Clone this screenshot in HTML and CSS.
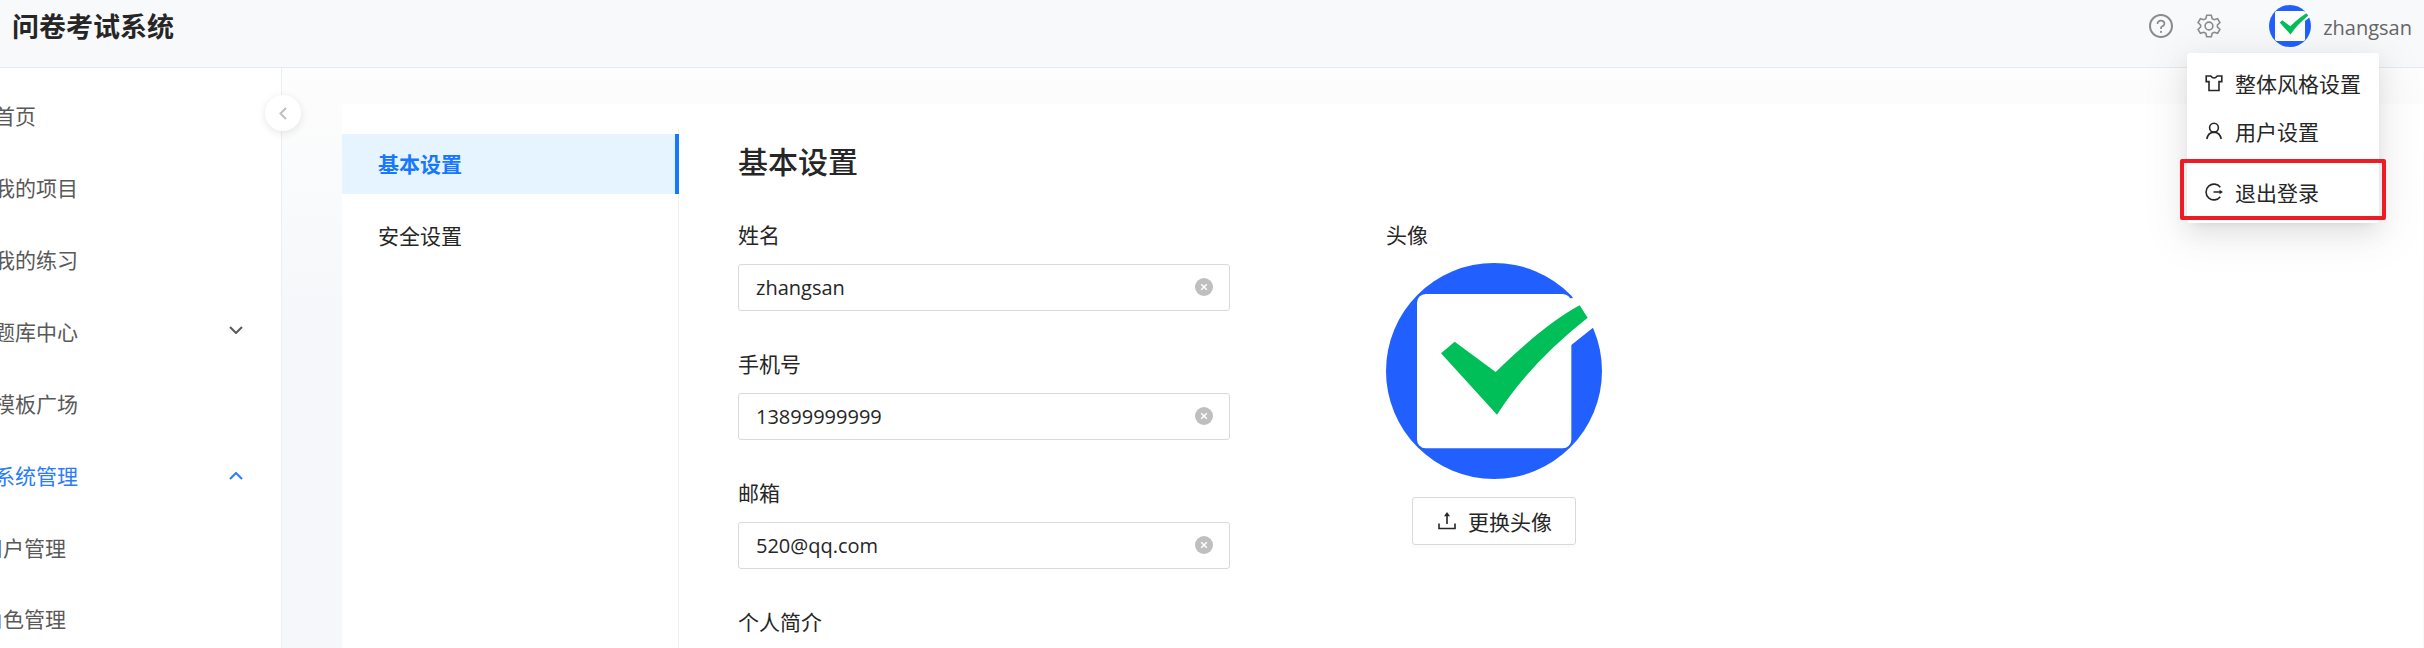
FILE: index.html
```html
<!DOCTYPE html>
<html lang="zh-CN">
<head>
    <meta charset="UTF-8">
    <title>问卷考试系统</title>
    <link rel="stylesheet" href="styles.css">
</head>
<body>
<!-- 公用图形 -->
<svg class="defs" width="0" height="0">
    <symbol id="logo" viewBox="0 0 648 648">
        <circle cx="324" cy="324" r="324" fill="#2160ff"/>
        <rect x="93" y="93" width="463" height="463" rx="26" fill="#fff"/>
        <path d="M540 106H558L575 90H660V163L621 194L555 247H540Z" fill="#fff"/>
        <path d="M165 271L206 236L329 327Q475 184 581 127L605 164Q432 300 333 455Z" fill="#00bf58"/>
    </symbol>
    <symbol id="clear" viewBox="0 0 18 18">
        <circle cx="9" cy="9" r="9" fill="#bfbfbf"/>
        <path d="M6.2 6.2L11.8 11.8M11.8 6.2L6.2 11.8" stroke="#fff" stroke-width="1.5"/>
    </symbol>
</svg>

<header class="header">
    <h1 class="title">问卷考试系统</h1>
    <div class="tools">
        <svg class="tool" viewBox="64 64 896 896"><path d="M512 64C264.600 64 64 264.600 64 512s200.600 448 448 448 448-200.600 448-448S759.400 64 512 64zm0 820c-205.400 0-372-166.600-372-372s166.600-372 372-372 372 166.600 372 372-166.600 372-372 372z"/><path d="M623.600 316.700C593.600 290.400 554 276 512 276s-81.600 14.500-111.600 40.700C369.200 344 352 380.700 352 420v7.600c0 4.400 3.600 8 8 8h48c4.400 0 8-3.600 8-8V420c0-44.100 43.100-80 96-80s96 35.900 96 80c0 31.100-22 59.600-56.100 72.700-21.200 8.100-39.200 22.300-52.100 40.900-13.100 19-19.900 41.800-19.900 64.900V620c0 4.400 3.600 8 8 8h48c4.400 0 8-3.600 8-8v-22.700a48.300 48.300 0 0130.900-44.800c59-22.700 97.100-74.700 97.100-132.500.1-39.300-17.100-76-48.300-103.300zM472 732a40 40 0 1080 0 40 40 0 10-80 0z"/></svg>
        <svg class="tool" viewBox="0 0 24 24"><path class="line" d="M9.700 1.200H14.300L15.200 4.600L17.200 5.700L20.600 4.700L22.900 8.700L20.400 11V13L22.900 15.300L20.600 19.300L17.200 18.300L15.200 19.400L14.300 22.800H9.700L8.800 19.400L6.800 18.300L3.400 19.300L1.100 15.300L3.600 13V11L1.100 8.700L3.400 4.700L6.800 5.700L8.800 4.600Z"/><circle class="line" cx="12" cy="12" r="3.900"/></svg>
    </div>
    <div class="user">
        <svg class="head"><use href="#logo"/></svg>
        <span class="latin">zhangsan</span>
        <div class="dropdown">
            <div class="option">
                <svg viewBox="0 0 18 18"><path class="line" d="M1.200 2H5.700Q9 6 12.300 2H16.800V7.600H14V16.500H4V7.600H1.200Z"/></svg>
                整体风格设置
            </div>
            <div class="option">
                <svg viewBox="0 0 18 18"><circle class="line" cx="9" cy="5.700" r="4.400"/><path class="line" d="M1.800 17Q3 10.500 9 10.100Q15 10.500 16.200 17"/></svg>
                用户设置
            </div>
            <div class="option logout">
                <svg viewBox="0 0 18 18"><path class="line" d="M15.300 4.300A7.900 7.900 0 1 0 15.300 13.700M8.500 9H15"/><path d="M14.500 6.700L18 9L14.500 11.300Z"/></svg>
                退出登录
            </div>
        </div>
    </div>
</header>

<div class="layout">
    <nav class="sidebar">
        <div class="item">首页</div>
        <div class="item">我的项目</div>
        <div class="item">我的练习</div>
        <div class="item">题库中心<svg class="arrow down" viewBox="0 0 14 8"><path d="M1 1L7 7L13 1"/></svg></div>
        <div class="item">模板广场</div>
        <div class="item active">系统管理<svg class="arrow" viewBox="0 0 14 8"><path d="M1 7L7 1L13 7"/></svg></div>
        <div class="item sub">用户管理</div>
        <div class="item sub">角色管理</div>
        <div class="collapse"><svg viewBox="0 0 8 13"><path d="M7 1L1.500 6.500L7 12"/></svg></div>
    </nav>

    <main class="content">
        <div class="card">
            <div class="tabs">
                <div class="tab selected">基本设置</div>
                <div class="tab">安全设置</div>
            </div>
            <div class="panel">
                <h2>基本设置</h2>
                <div class="columns">
                    <form class="form">
                        <div class="field">
                            <label>姓名</label>
                            <div class="input latin">zhangsan<svg><use href="#clear"/></svg></div>
                        </div>
                        <div class="field">
                            <label>手机号</label>
                            <div class="input latin">13899999999<svg><use href="#clear"/></svg></div>
                        </div>
                        <div class="field">
                            <label>邮箱</label>
                            <div class="input latin">520@qq.com<svg><use href="#clear"/></svg></div>
                        </div>
                        <div class="field last">
                            <label>个人简介</label>
                        </div>
                    </form>
                    <div class="avatar">
                        <label>头像</label>
                        <svg class="photo"><use href="#logo"/></svg>
                        <div class="upload">
                            <svg viewBox="0 0 18 18"><path class="line" d="M1 11.500V16.500H17V11.500M9 12V3"/><path d="M9 0L12 4.200H6Z"/></svg>
                            更换头像
                        </div>
                    </div>
                </div>
            </div>
        </div>
    </main>
</div>
</body>
</html>
```
FILE: styles.css
```css
* {
    box-sizing: border-box;
}
body {
    margin: 0;
    height: 648px;
    overflow: hidden;
    font-family: "Noto Sans CJK SC", sans-serif;
    font-size: 21px;
    line-height: 33px;
    color: #262626;
    background: #fff;
}
svg {
    display: block;
    flex: none;
    fill: currentColor;
}
.defs {
    position: absolute;
}
.line {
    fill: none;
    stroke: currentColor;
    stroke-width: 1.6;
}
.latin {
    font-family: "Open Sans", sans-serif;
    font-size: 20px;
}

/* 顶部 */
.header {
    display: flex;
    height: 68px;
    padding: 0 12px 0 12px;
    background: #f8f9fb;
    border-bottom: 1px solid #e6e9ed;
}
.title {
    margin: 0;
    font-size: 27px;
    line-height: 52px;
    font-weight: 700;
}
.tools {
    display: flex;
    gap: 24px;
    margin-left: auto;
    padding-top: 14px;
    color: #8a8b8c;
}
.tool {
    width: 24px;
    height: 24px;
}
.user {
    position: relative;
    display: flex;
    gap: 12px;
    margin-left: 48px;
    padding-top: 5px;
    color: #666;
}
.user > .latin {
    line-height: 46px;
}
.head {
    width: 42px;
    height: 42px;
}
.dropdown {
    position: absolute;
    z-index: 5;
    top: 53px;
    right: 33px;
    width: 192px;
    height: 170px;
    padding: 6px 0;
    color: #262626;
    background: #fff;
    border-radius: 3px;
    box-shadow: 0 9px 42px 12px rgba(0, 0, 0, .05), 0 9px 24px rgba(0, 0, 0, .08), 0 4px 9px -6px rgba(0, 0, 0, .12);
}
.option {
    display: flex;
    align-items: center;
    gap: 12px;
    height: 48px;
    padding-left: 18px;
    white-space: nowrap;
}
.option svg {
    width: 18px;
    height: 18px;
}
/* 红框标注 */
.option.logout {
    width: 206px;
    height: 61px;
    margin: 4px 0 0 -7px;
    padding: 5px 0 0 21px;
    border: 4px solid #ed1c24;
    border-radius: 2px;
}

/* 侧边菜单 */
.layout {
    display: flex;
    height: 580px;
}
.sidebar {
    position: relative;
    width: 282px;
    padding-top: 11px;
    background: #fff;
    border-right: 1px solid #eceef0;
    color: #595959;
}
.item {
    display: flex;
    align-items: center;
    justify-content: space-between;
    height: 72px;
    padding-right: 38px;
    margin-left: -6px;
}
.item:nth-child(8) {
    height: 69px;
    padding-bottom: 0;
    line-height: 72px;
}
.item.active {
    color: #2a7bff;
}
.item.sub {
    margin-left: -18px;
}
.arrow {
    width: 14px;
    height: 8px;
    fill: none;
    stroke: currentColor;
    stroke-width: 2;
    margin-top: 2px;
}
.arrow.down {
    margin-top: -2px;
}
.collapse {
    position: absolute;
    top: 27px;
    right: -20px;
    display: flex;
    align-items: center;
    justify-content: center;
    width: 36px;
    height: 36px;
    border-radius: 50%;
    background: #fff;
    box-shadow: 0 2px 8px rgba(0, 0, 0, .1);
}
.collapse svg {
    width: 8px;
    height: 13px;
    fill: none;
    stroke: #bfbfbf;
    stroke-width: 2;
}

/* 内容 */
.content {
    flex: 1;
    padding: 36px 1px 0 60px;
    background: linear-gradient(#fdfdfd, #f5f7fa 45%);
}
.card {
    display: flex;
    height: 544px;
    padding-top: 24px;
    background: #fff;
}
.tabs {
    width: 337px;
    padding-top: 6px;
    border-right: 1px solid #f0f0f0;
}
.tab {
    width: 337px;
    height: 60px;
    margin-bottom: 12px;
    padding-left: 36px;
    line-height: 59px;
}
.tab.selected {
    color: #1677ff;
    font-weight: 700;
    background: #e6f4ff;
    border-right: 4px solid #1677ff;
}
.panel {
    padding: 11px 0 0 59px;
}
h2 {
    margin: 0 0 18px;
    font-size: 30px;
    line-height: 42px;
    font-weight: 500;
}
.columns {
    display: flex;
    gap: 156px;
}
.form {
    width: 492px;
}
.field {
    height: 129px;
    padding-top: 18px;
}
.field.last {
    height: 60px;
}
.field label, .avatar label {
    display: block;
    height: 47px;
    line-height: 34px;
}
.input {
    display: flex;
    align-items: center;
    justify-content: space-between;
    height: 47px;
    padding: 0 16px 0 17px;
    border: 1px solid #d9d9d9;
    border-radius: 3px;
}
.input.latin {
    line-height: 47px;
}
.input svg {
    width: 18px;
    height: 18px;
    margin-top: -1px;
}
.avatar {
    width: 216px;
    padding-top: 18px;
}
.photo {
    width: 216px;
    height: 216px;
    margin-top: -1px;
}
.upload {
    display: flex;
    align-items: center;
    gap: 12px;
    width: 164px;
    height: 48px;
    margin: 18px auto 0;
    padding-left: 25px;
    border: 1px solid #d9d9d9;
    border-radius: 3px;
    box-shadow: 0 3px 0 rgba(0, 0, 0, .016);
}
.upload svg {
    width: 18px;
    height: 18px;
}
```
